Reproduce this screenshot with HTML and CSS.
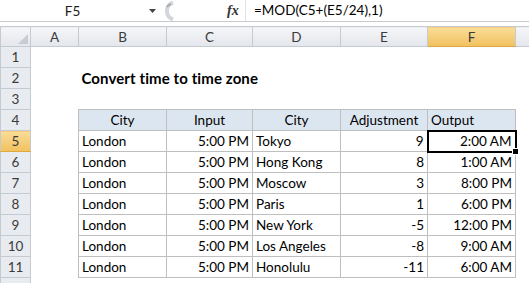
FILE: index.html
```html
<!DOCTYPE html>
<html lang="en">
<head>
    <meta charset="UTF-8">
    <meta name="viewport" content="width=device-width, initial-scale=1.0">
    <title>Convert time to time zone</title>
    <link rel="stylesheet" href="styles.css">
</head>
<body>
    <div class="formula-bar">
        <div class="name-box">F5</div>
        <div class="drop">
            <svg width="7" height="4" viewBox="0 0 7 4"><polygon points="0,0 7,0 3.5,4" fill="#444"/></svg>
        </div>
        <div class="grip">
            <svg width="16" height="20" viewBox="0 0 16 20">
                <path d="M14 1.5 A9 9 0 0 0 14 18.5" fill="none" stroke="#d3d6da" stroke-width="4"/>
                <path d="M12 3 A8 8 0 0 0 8 6" fill="none" stroke="#9ea3aa" stroke-width="1.5"/>
            </svg>
        </div>
        <div class="fx"><i>fx</i></div>
        <div class="formula">=MOD(C5+(E5/24),1)</div>
    </div>

    <table class="sheet">
        <colgroup>
            <col class="c-rh">
            <col class="c-a">
            <col class="c-b">
            <col class="c-c">
            <col class="c-d">
            <col class="c-e">
            <col class="c-f">
            <col>
        </colgroup>
        <thead>
            <tr>
                <th class="corner">
                    <svg width="10" height="10" viewBox="0 0 10 10"><polygon points="10,0 10,10 0,10" fill="#c8ccd2"/></svg>
                </th>
                <th>A</th>
                <th>B</th>
                <th>C</th>
                <th>D</th>
                <th>E</th>
                <th class="sel">F</th>
                <th class="last"></th>
            </tr>
        </thead>
        <tbody>
            <tr><th>1</th><td></td><td></td><td></td><td></td><td></td><td></td><td></td></tr>
            <tr><th>2</th><td></td><td class="title" colspan="3">Convert time to time zone</td><td></td><td></td><td></td></tr>
            <tr><th>3</th><td></td><td></td><td></td><td></td><td></td><td></td><td></td></tr>
            <tr>
                <th>4</th><td></td>
                <td class="t h">City</td>
                <td class="t h">Input</td>
                <td class="t h">City</td>
                <td class="t h">Adjustment</td>
                <td class="t h l">Output</td>
                <td></td>
            </tr>
            <tr>
                <th class="sel">5</th><td></td>
                <td class="t">London</td>
                <td class="t r">5:00 PM</td>
                <td class="t">Tokyo</td>
                <td class="t r">9</td>
                <td class="t r active">2:00 AM</td>
                <td></td>
            </tr>
            <tr>
                <th>6</th><td></td>
                <td class="t">London</td>
                <td class="t r">5:00 PM</td>
                <td class="t">Hong Kong</td>
                <td class="t r">8</td>
                <td class="t r">1:00 AM</td>
                <td></td>
            </tr>
            <tr>
                <th>7</th><td></td>
                <td class="t">London</td>
                <td class="t r">5:00 PM</td>
                <td class="t">Moscow</td>
                <td class="t r">3</td>
                <td class="t r">8:00 PM</td>
                <td></td>
            </tr>
            <tr>
                <th>8</th><td></td>
                <td class="t">London</td>
                <td class="t r">5:00 PM</td>
                <td class="t">Paris</td>
                <td class="t r">1</td>
                <td class="t r">6:00 PM</td>
                <td></td>
            </tr>
            <tr>
                <th>9</th><td></td>
                <td class="t">London</td>
                <td class="t r">5:00 PM</td>
                <td class="t">New York</td>
                <td class="t r">-5</td>
                <td class="t r">12:00 PM</td>
                <td></td>
            </tr>
            <tr>
                <th>10</th><td></td>
                <td class="t">London</td>
                <td class="t r">5:00 PM</td>
                <td class="t">Los Angeles</td>
                <td class="t r">-8</td>
                <td class="t r">9:00 AM</td>
                <td></td>
            </tr>
            <tr>
                <th>11</th><td></td>
                <td class="t">London</td>
                <td class="t r">5:00 PM</td>
                <td class="t">Honolulu</td>
                <td class="t r">-11</td>
                <td class="t r">6:00 AM</td>
                <td></td>
            </tr>
            <tr><th></th><td></td><td></td><td></td><td></td><td></td><td></td><td></td></tr>
        </tbody>
    </table>
</body>
</html>
```

FILE: styles.css
```css
body {
    margin: 0;
    width: 529px;
    overflow: hidden;
    font-family: 'Lato', 'Liberation Sans', sans-serif;
    font-size: 13.5px;
    color: #000;
    background-color: #fff;
}

/* formula bar */
.formula-bar {
    display: flex;
    align-items: center;
    height: 21px;
    border-bottom: 1px solid #c6c9ce;
    margin-bottom: 4px;
}

.name-box {
    width: 145px;
    text-align: center;
    color: #222;
}

.drop {
    width: 14px;
    display: flex;
    justify-content: center;
}

.grip {
    width: 16px;
    height: 20px;
}

.fx {
    margin-left: 52px;
    width: 18px;
    font-family: 'Liberation Serif', serif;
    font-weight: bold;
    font-size: 14px;
    color: #333;
}

.formula {
    flex: 1;
    height: 21px;
    line-height: 21px;
    padding-left: 8px;
    border-left: 1px solid #e1e3e6;
}

/* sheet grid */
.sheet {
    border-collapse: collapse;
    table-layout: fixed;
    width: 529px;
}

.c-rh { width: 30px; }
.c-a { width: 48px; }
.c-b { width: 88px; }
.c-c { width: 86px; }
.c-d { width: 88px; }
.c-e { width: 87px; }
.c-f { width: 88px; }

.sheet thead tr { height: 20px; }
.sheet tbody tr { height: 21px; }

.sheet th {
    padding: 0;
    font-weight: normal;
    color: #3b3b3b;
    background: linear-gradient(#f5f6f8, #e3e6eb);
    border: 1px solid #c5cad1;
}

.sheet tbody th {
    background: #e8ebef;
}

.sheet th.sel {
    background: linear-gradient(#f9dd99, #f1c15e);
    border-bottom-color: #e0a93f;
}

.sheet th.last {
    border-right: none;
}

.corner {
    text-align: right;
    vertical-align: bottom;
    line-height: 0;
}

.corner svg {
    margin: 0 2px 2px 0;
}

.sheet td {
    padding: 0 3px;
    white-space: nowrap;
    overflow: hidden;
}

.title {
    font-weight: bold;
    font-size: 15px;
    letter-spacing: 0.1px;
}

.t {
    border: 1px solid #bfbfbf;
}

.t.h {
    background-color: #dce6f1;
    text-align: center;
}

.t.l {
    text-align: left;
}

.r {
    text-align: right;
}

.active {
    position: relative;
    overflow: visible !important;
    border: 2px solid #000;
}

.active::after {
    content: '';
    position: absolute;
    right: -4px;
    bottom: -4px;
    width: 5px;
    height: 5px;
    background-color: #000;
    border: 1px solid #fff;
}
```
